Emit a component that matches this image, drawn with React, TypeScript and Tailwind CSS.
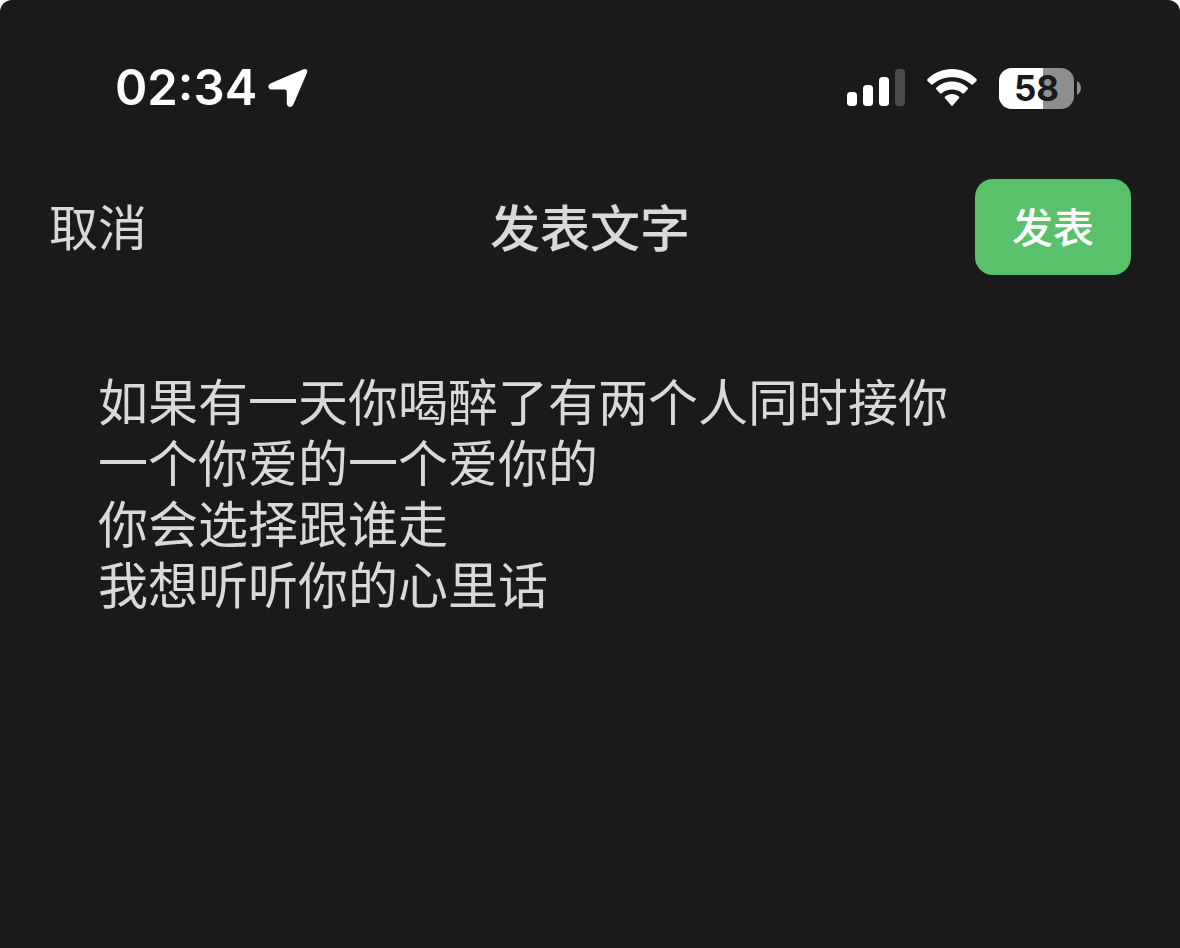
import { useState } from 'react';

const DRAFT = [
  '如果有一天你喝醉了有两个人同时接你',
  '一个你爱的一个爱你的',
  '你会选择跟谁走',
  '我想听听你的心里话',
].join('\n');

function LocationArrow() {
  return (
    <svg width="40" height="40" viewBox="0 0 40 40" fill="#fff" aria-hidden="true">
      <path d="M35 1.4C38 0 40.200 1.800 39 4.800L25.400 36.600C23.900 40.200 18.800 39.400 18.800 35.400V24C18.800 22.400 18 21.600 16.400 21.600H4.400C-0.200 21.600 -1 16.900 2.800 15.200Z" />
    </svg>
  );
}

function SignalBars() {
  return (
    <svg width="58" height="38" viewBox="0 0 58 38" fill="#fff" aria-hidden="true">
      <rect x="0" y="23" width="10" height="14" rx="3.5" />
      <rect x="16" y="16" width="10" height="21" rx="3.5" />
      <rect x="32" y="8" width="10" height="29" rx="3.5" />
      <rect x="48" y="0" width="10" height="37" rx="3.5" fill="#4a4a4a" />
    </svg>
  );
}

function WifiIcon() {
  return (
    <svg width="50" height="38" viewBox="0 0 50 38" fill="#fff" aria-hidden="true">
      <path d="M25 0C15.700 0 7 3.700 0.600 10C0 10.600 0 11.300 0.600 11.900L3.900 15.200C4.500 15.800 5.200 15.800 5.800 15.200C11 10.700 17.800 8.200 25 8.200S39 10.700 44.200 15.200C44.800 15.800 45.500 15.800 46.100 15.200L49.400 11.900C50 11.300 50 10.600 49.400 10C43 3.700 34.300 0 25 0Z" />
      <path d="M25 12.500C19 12.500 13.600 14.800 9.500 18.600C8.900 19.200 8.900 19.900 9.500 20.500L12.900 24.200C13.500 24.800 14.100 24.700 14.700 24.200C17.500 21.900 21.100 20.600 25 20.600S32.500 21.900 35.300 24.200C35.900 24.700 36.500 24.800 37.100 24.200L40.500 20.500C41.100 19.900 41.100 19.200 40.500 18.600C36.400 14.800 31 12.500 25 12.500Z" />
      <path d="M25 25C22.400 25 20 25.900 18.200 27.400C17.500 28 17.500 28.700 18.100 29.300L24 36.300C24.700 37.100 25.300 37.100 26 36.300L31.900 29.300C32.500 28.700 32.500 28 31.800 27.400C30 25.900 27.600 25 25 25Z" />
    </svg>
  );
}

function Battery({ level }: { level: number }) {
  return (
    <div className="flex items-center gap-[3px]">
      <div className="relative flex h-[41px] w-[75px] items-center justify-center overflow-hidden rounded-[13px] bg-[#8e8e8e]">
        <div className="absolute inset-y-0 left-0 bg-white" style={{ width: `${level}%` }} />
        <span className="relative text-[35px] leading-10 font-bold text-[#1a1a1a]">{level}</span>
      </div>
      <svg width="4" height="14" viewBox="0 0 4 14" fill="#8e8e8e" aria-hidden="true">
        <path d="M0 0C2.400 1.200 4 3.900 4 7S2.400 12.800 0 14Z" />
      </svg>
    </div>
  );
}

function StatusBar() {
  return (
    <div className="flex h-20 items-center justify-between pr-[99px] pl-[115px] font-['Inter',sans-serif]">
      <div className="flex items-center gap-[11px]">
        <span className="text-[49px] leading-[60px] font-semibold text-white">02:34</span>
        <LocationArrow />
      </div>
      <div className="flex items-center gap-[22px]">
        <SignalBars />
        <WifiIcon />
        <Battery level={58} />
      </div>
    </div>
  );
}

export default function App() {
  const [text, setText] = useState(DRAFT);

  return (
    <div className="min-h-screen bg-white">
      <main className="flex min-h-screen flex-col rounded-t-xl bg-[#1a1a1a] pt-12 font-['Noto_Sans_CJK_SC',sans-serif] text-[#d9d9d8]">
        <StatusBar />

        <header className="mt-[51px] grid grid-cols-[1fr_auto_1fr] items-center px-[49px]">
          <button type="button" className="justify-self-start pb-1 text-[49px] leading-[60px]">
            取消
          </button>
          <h1 className="pb-1 text-[50px] leading-[60px] font-medium">发表文字</h1>
          <button
            type="button"
            className="h-24 w-[156px] justify-self-end rounded-[18px] bg-[#58c16a] pb-1 text-[41px] leading-[60px] font-medium text-white"
          >
            发表
          </button>
        </header>

        <textarea
          aria-label="发表文字"
          value={text}
          onChange={(e) => setText(e.target.value)}
          className="mt-[94px] min-h-[500px] w-full flex-1 resize-none bg-transparent px-[98px] text-[50px] leading-[61px] outline-none"
        />
      </main>
    </div>
  );
}
